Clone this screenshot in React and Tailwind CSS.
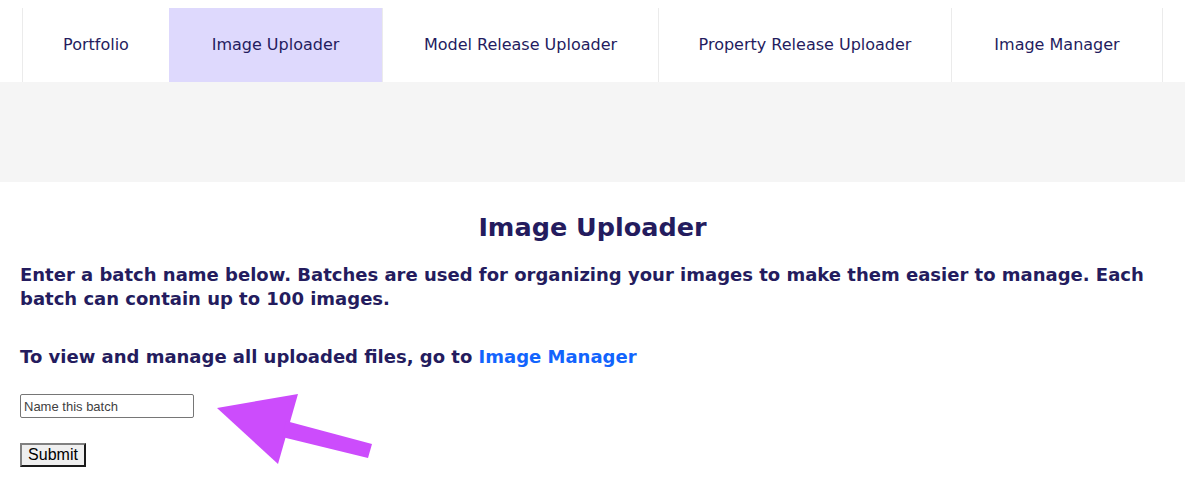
const tabs = [
  { label: 'Portfolio', w: 'w-[147px]' },
  { label: 'Image Uploader', w: 'w-[213px]', active: true },
  { label: 'Model Release Uploader', w: 'w-[276px]' },
  { label: 'Property Release Uploader', w: 'w-[293px]' },
  { label: 'Image Manager', w: 'w-[212px]' },
];

function Arrow() {
  return (
    <svg width="170" height="80" viewBox="0 0 170 80" className="absolute left-[190px] top-[-3px]">
      {/* annotation arrow */}
      <polygon points="7,17 88,3 68,73" fill="#cc4cfc" />
      <polygon points="76,30 162,53 158,67 72,46" fill="#cc4cfc" />
    </svg>
  );
}

export default function App() {
  return (
    <div className="min-h-[478px] bg-white text-[#241c5e]" style={{ fontFamily: '"DejaVu Sans", sans-serif' }}>
      <nav className="flex pt-2 pl-[22px]">
        {tabs.map((t, i) => (
          <a
            key={t.label}
            href="#"
            className={`${t.w} flex h-[74px] items-center justify-center text-[16px] ${
              t.active ? 'bg-[#ded9fd]' : 'border-l border-[#ebebeb]'
            } ${i === tabs.length - 1 ? 'border-r' : ''}`}
          >
            {t.label}
          </a>
        ))}
      </nav>

      <div className="h-[100px] bg-[#f5f5f5]" />

      <main className="px-5">
        <h1 className="mt-[27px] text-center text-[25.5px] leading-[36px] font-bold">Image Uploader</h1>
        <p className="mt-[18px] text-[18px] leading-[24px] font-bold">
          Enter a batch name below. Batches are used for organizing your images to make them easier to manage. Each batch can contain up to 100 images.
        </p>
        <p className="mt-[34px] text-[18px] leading-[24px] font-bold">
          To view and manage all uploaded files, go to{' '}
          <a href="#" className="text-[#1264fd]">Image Manager</a>
        </p>

        <div className="relative mt-[25px]" style={{ fontFamily: '"Liberation Sans", Arial, sans-serif' }}>
          <input
            type="text"
            placeholder="Name this batch"
            className="block h-[24px] w-[174px] rounded-[2px] border border-[#767676] px-[3px] text-[13px] text-black placeholder:text-[#3f3f3f] outline-none"
          />
          <Arrow />
          <button className="mt-[25px] block h-[24px] w-[66px] border-2 border-t-[#808080] border-l-[#808080] border-r-[#1a1a1a] border-b-[#1a1a1a] bg-[#efefef] text-[16px] leading-none text-black">
            Submit
          </button>
        </div>
      </main>
    </div>
  );
}
